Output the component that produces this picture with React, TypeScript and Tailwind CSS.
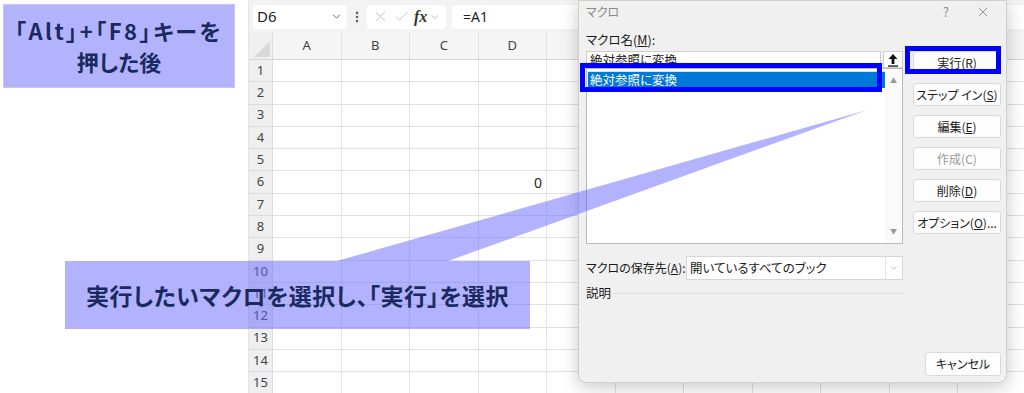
import { Check, ChevronDown, EllipsisVertical, X } from "lucide-react"

const cols = ["A", "B", "C", "D", "E", "F", "G", "H", "I", "J", "K"]
const rows = Array.from({ length: 15 }, (_, i) => i + 1)

function FormulaBar() {
	return (
		<div className="h-[33px] shrink-0 bg-[#f3f3f3] flex items-center pl-[4px] gap-[6px] font-['Noto_Sans',sans-serif]">
			{/* Name box */}
			<div className="w-[94px] h-[24px] bg-white rounded-[4px] flex items-center justify-between pl-[4px] pr-[4px] text-[15px] text-[#222]">
				<span>D6</span>
				<ChevronDown size={13} strokeWidth={1.6} className="text-[#555]" />
			</div>
			<EllipsisVertical size={14} strokeWidth={2.5} className="text-[#666] -mx-[3px]" />
			{/* fx box */}
			<div className="w-[79px] h-[24px] bg-white rounded-[4px] flex items-center gap-[4px] pl-[5px] text-[#b5b5b5]">
				<X size={17} strokeWidth={1.1} />
				<Check size={17} strokeWidth={1.1} />
				<span className="font-['Liberation_Serif',serif] italic font-bold text-[16px] text-[#333] leading-none">fx</span>
				<ChevronDown size={12} strokeWidth={1.4} className="text-[#999] -ml-[2px]" />
			</div>
			{/* Formula */}
			<div className="flex-1 h-[24px] bg-white rounded-l-[4px] flex items-center pl-[11px] text-[14px] text-[#222]">
				=A1
			</div>
		</div>
	)
}

function Sheet() {
	return (
		<div className="flex-1 h-[393px] overflow-hidden flex flex-col border-l border-[#e4e4e4] font-['Noto_Sans',sans-serif]">
			<FormulaBar />
			{/* Column headers */}
			<div className="h-[27px] shrink-0 flex bg-[#f5f5f5] border-b border-[#d6d6d6]">
				<div className="w-[24px] shrink-0 relative bg-[#efefef] border-r border-[#dcdcdc]">
					<svg width="24" height="27" className="absolute inset-0">
						<polygon points="21,8 21,24 5,24" fill="#d9d9d9" />
					</svg>
				</div>
				{cols.map((c) => (
					<div
						key={c}
						className="w-[68.5px] shrink-0 flex items-center justify-center text-[13px] text-[#444] border-r border-[#e0e0e0]"
					>
						{c}
					</div>
				))}
			</div>
			{/* Rows */}
			{rows.map((r) => (
				<div key={r} className="h-[22.3px] shrink-0 flex">
					<div className="w-[24px] shrink-0 bg-[#efefef] border-r border-b border-[#dcdcdc] flex items-center justify-center text-[13px] text-[#444]">
						{r}
					</div>
					{cols.map((c) => (
						<div
							key={c}
							className="w-[68.5px] shrink-0 border-r border-b border-[#e2e2e2] flex items-center justify-end pr-[4px] text-[14px] text-[#222]"
						>
							{r === 6 && c === "D" ? "0" : ""}
						</div>
					))}
				</div>
			))}
		</div>
	)
}

function DlgButton({ label, disabled }: { label: React.ReactNode; disabled?: boolean }) {
	return (
		<div
			className={`h-[23px] w-[88px] bg-[#fdfdfd] border border-[#d9d9d9] rounded-[3px] flex items-center justify-center whitespace-nowrap text-[12px] leading-none ${
				disabled ? "text-[#9a9a9a]" : "text-[#1a1a1a]"
			}`}
		>
			{label}
		</div>
	)
}

function MacroDialog() {
	return (
		<div className="absolute left-[578px] top-0 w-[429px] h-[383px] bg-[#f0f0f0] border border-[#cfcfcf] rounded-b-[8px] shadow-[0_4px_18px_rgba(0,0,0,0.22)] flex flex-col [font-feature-settings:'palt'] font-['Noto_Sans_CJK_JP',sans-serif]">
			{/* Title bar */}
			<div className="h-[22px] flex items-center justify-between pl-[7px] pr-[15px] text-[12px] text-[#8a8a8a]">
				<span>マクロ</span>
				<div className="flex items-center gap-[26px]">
					<span className="text-[13px]">?</span>
					<X size={16} strokeWidth={1} className="text-[#666]" />
				</div>
			</div>

			<div className="flex-1 flex gap-[10px] px-[7px]">
				{/* Left column */}
				<div className="w-[317px] flex flex-col">
					<div className="h-[15px] mt-[10px] mb-[3px] flex items-center text-[12.5px] leading-none text-[#1a1a1a]">
						マクロ名(<span className="underline">M</span>):
					</div>
					<div className="flex">
						<div className="w-[295px] h-[17px] bg-white border border-[#cfcfcf] border-b-0 flex items-center pl-[3px] text-[12.5px] text-[#1a1a1a]">
							絶対参照に変換
						</div>
						<div className="w-[20px] ml-[2px] h-[17px] bg-white border border-[#cfcfcf] flex items-center justify-center">
							<svg width="12" height="14" viewBox="0 0 12 14">
								<path d="M6 1 L10.5 6 H7.4 V11 H4.6 V6 H1.5 Z" fill="#111" />
								<rect x="1" y="12.4" width="10" height="1.3" fill="#111" />
							</svg>
						</div>
					</div>
					{/* List box */}
					<div className="h-[176px] bg-white border border-[#b9b9b9] flex">
						<div className="flex-1 pt-[2px] pl-[1px]">
							<div className="h-[17px] bg-[#0078d7] border-t border-[#cfe3f7] flex items-center pl-[2px] text-[12.5px] text-white">
								絶対参照に変換
							</div>
						</div>
						<div className="w-[17px] bg-[#fafafa] flex flex-col items-center justify-between py-[8px] text-[7px] text-[#9a9a9a] leading-none">
							<span>▲</span>
							<span>▼</span>
						</div>
					</div>
					{/* Store location */}
					<div className="mt-[12px] flex items-center justify-between">
						<span className="whitespace-nowrap text-[12px] leading-none text-[#1a1a1a]">
							マクロの保存先(<span className="underline">A</span>):
						</span>
						<div className="w-[217px] h-[24px] bg-white border border-[#d6d6d6] flex">
							<div className="flex-1 flex items-center pl-[3px] text-[12.5px] text-[#1a1a1a]">
								開いているすべてのブック
							</div>
							<div className="w-[17px] border-l border-[#e2e2e2] flex items-center justify-center">
								<ChevronDown size={10} strokeWidth={1.3} className="text-[#888]" />
							</div>
						</div>
					</div>
					<div className="mt-[4px] flex items-center gap-[2px] text-[12.5px] text-[#1a1a1a]">
						<span>説明</span>
						<div className="flex-1 h-px bg-[#dedede]" />
					</div>
				</div>

				{/* Right column */}
				<div className="w-[88px] flex flex-col pt-[28px] gap-[9px]">
					<DlgButton label={<>実行(<span className="underline">R</span>)</>} />
					<DlgButton label={<>ステップ イン(<span className="underline">S</span>)</>} />
					<DlgButton label={<>編集(<span className="underline">E</span>)</>} />
					<DlgButton label="作成(C)" disabled />
					<DlgButton label={<>削除(<span className="underline">D</span>)</>} />
					<DlgButton label={<>オプション(<span className="underline">O</span>)...</>} />
					<div className="flex-1" />
					<div className="self-end mb-[6px] w-[76px] h-[24px] bg-[#fdfdfd] border border-[#d9d9d9] rounded-[3px] flex items-center justify-center text-[12px] text-[#1a1a1a]">
						キャンセル
					</div>
				</div>
			</div>
		</div>
	)
}

export default function App() {
	return (
		<div className="w-[1024px] h-[393px] relative overflow-hidden bg-white flex">
			{/* Left margin with first note */}
			<div className="w-[248px] shrink-0 pt-[4px] pl-[3px]">
				<div className="w-[232px] h-[84px] bg-[#b2b2fd] border border-[#c4c4fb] flex flex-col items-center justify-center text-[22px] leading-[31px] font-bold text-[#1b2a5e] [font-feature-settings:'palt'] font-['Noto_Sans_CJK_JP',sans-serif]">
					<span className="tracking-[2.5px]">「Alt」+「F8」キーを</span>
					<span>押した後</span>
				</div>
			</div>

			<Sheet />
			<MacroDialog />

			{/* Callout wedge */}
			<svg width="1024" height="393" className="absolute inset-0 pointer-events-none">
				<polygon points="867,110 337,261 448,261" fill="#6666ff" fillOpacity="0.5" />
			</svg>

			{/* Second note */}
			<div className="absolute left-[65px] top-[261px] w-[465px] h-[68px] bg-[#6666ff]/50 flex items-center justify-center text-[23px] tracking-[0.5px] font-bold text-[#1b2a5e] [font-feature-settings:'palt'] font-['Noto_Sans_CJK_JP',sans-serif]">
				実行したいマクロを選択し、「実行」を選択
			</div>

			{/* Highlight frames */}
			<div className="absolute left-[580px] top-[63px] w-[302px] h-[29px] border-[5px] border-[#0000ff]" />
			<div className="absolute left-[905px] top-[46px] w-[96px] h-[28px] border-[5px] border-[#0000ff]" />
		</div>
	)
}
